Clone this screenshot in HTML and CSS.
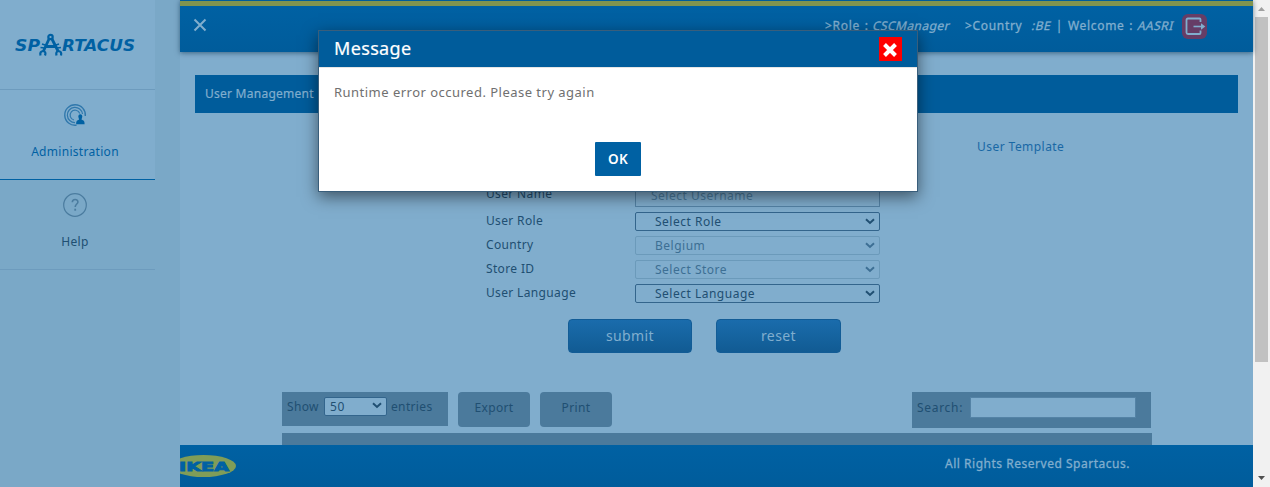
FILE: index.html
```html
<!DOCTYPE html>
<html lang="en">
<head>
<meta charset="utf-8">
<title>Spartacus - User Management</title>
<link rel="stylesheet" href="styles.css">
</head>
<body>
<div class="app">
  <aside class="sidebar">
    <div class="brand">
      <svg width="124" height="28" viewBox="0 0 124 28">
        <g class="brand-text">
          <text x="0" y="20" textLength="25" lengthAdjust="spacingAndGlyphs">SP</text>
          <text x="47" y="20" textLength="73" lengthAdjust="spacingAndGlyphs">RTACUS</text>
        </g>
        <g fill="none" stroke="#0061a3" stroke-width="2.8">
          <circle cx="35.500" cy="6" r="2.200" stroke-width="2.200"/>
          <path d="M34 8 28.500 20M37 8 43 20M31 15.500h9"/>
          <path d="M25.500 24.500q-1-4 2.500-4.500 3.500.5 2 4.500M41.500 24.500q-1-4 2-4.500 3.500.5 2.500 4.500" stroke-width="2.200"/>
          <path d="M27 13 30 14M25.500 16.500l4 .5M44 13 41 14M46 16.500l-4 .5" stroke-width="1.400"/>
        </g>
      </svg>
    </div>
    <div class="nav-item active">
      <svg class="nav-icon" width="24" height="24" viewBox="0 0 24 24" fill="none" stroke="#3078ac">
        <path d="M13.500 22.200A10.300 10.300 0 1 1 22.300 13" stroke-width="1.400"/>
        <path d="M12 19.600A7.600 7.600 0 1 1 19.500 11" stroke-width="1.200"/>
        <path d="M11 17A5 5 0 1 1 16.800 10.500" stroke-width="1.200"/>
        <path d="M15.500 14.500a2 2.200 0 1 1 3.600 0l-.6 2 2.300 1.200q.8.500.8 3.500h-8.500q0-3 .8-3.500l2.200-1.200z" fill="#0061a3" stroke="none"/>
      </svg>
      <span>Administration</span>
    </div>
    <div class="nav-item help">
      <svg class="nav-icon" width="24" height="24" viewBox="0 0 24 24" fill="none" stroke="#4b7c9f">
        <circle cx="12" cy="12" r="11.300" stroke-width="1.200"/>
        <path d="M9.300 9.200c.1-3.500 5.600-3.500 5.600-.2 0 2-2.700 2.200-2.700 5" stroke-width="1.600"/>
        <path d="M12.200 15.700v2" stroke-width="1.800"/>
      </svg>
      <span>Help</span>
    </div>
  </aside>

  <main class="main">
    <header class="topbar">
      <svg class="menu-close" width="14" height="14" viewBox="0 0 14 14"><path d="M1.500 1.500l11 11M12.500 1.500l-11 11" stroke="#80aece" stroke-width="2"/></svg>
      <div class="user-info">
        <span class="role">&gt;Role : <i>CSCManager</i></span>
        <span class="country">&gt;Country</span>
        <span class="welcome"><i>:BE</i> | Welcome : <i>AASRI</i></span>
      </div>
      <svg class="logout" width="25" height="25" viewBox="0 0 25 25">
        <rect width="25" height="25" rx="6" fill="#663d66"/>
        <path d="M18.500 8V5.500q0-1-1-1H6Q4.500 4.500 4.500 6v12.500q0 1.500 1.500 1.500h11.500q1 0 1-1v-2.500" fill="none" stroke="#80aece" stroke-width="1.800"/>
        <path d="M11.500 12.500H20" stroke="#80aece" stroke-width="1.600"/><path d="M19 9.300 23.300 12.500 19 15.700z" fill="#80aece"/>
      </svg>
    </header>

    <section class="content">
      <h1 class="page-title">User Management</h1>
      <a class="template-link">User Template</a>
      <form class="form">
        <div class="row row-first"><label>User Name</label><div class="control text-control">Select Username</div></div>
        <div class="row"><label>User Role</label><div class="control">Select Role<svg class="chevron" viewBox="0 0 10 7"><path d="M1 1.300l4 3.700 4-3.700"/></svg></div></div>
        <div class="row"><label>Country</label><div class="control disabled">Belgium<svg class="chevron" viewBox="0 0 10 7"><path d="M1 1.300l4 3.700 4-3.700"/></svg></div></div>
        <div class="row"><label>Store ID</label><div class="control disabled">Select Store<svg class="chevron" viewBox="0 0 10 7"><path d="M1 1.300l4 3.700 4-3.700"/></svg></div></div>
        <div class="row"><label>User Language</label><div class="control">Select Language<svg class="chevron" viewBox="0 0 10 7"><path d="M1 1.300l4 3.700 4-3.700"/></svg></div></div>
      </form>
      <div class="actions"><button class="btn">submit</button><button class="btn reset">reset</button></div>
      <div class="tools">
        <div class="length"><span class="show">Show</span><span class="count">50<svg class="chevron" viewBox="0 0 10 7"><path d="M1 1.300l4 3.700 4-3.700"/></svg></span>entries</div>
        <div class="tool">Export</div>
        <div class="tool">Print</div>
        <div class="search"><span class="search-label">Search:</span><span class="search-box"></span></div>
      </div>
      <div class="table-head"></div>
    </section>

    <footer class="footer">
      <svg class="ikea" width="57" height="24" viewBox="0 0 57 24">
        <ellipse cx="23.500" cy="12" rx="32.500" ry="11" fill="#809d58"/>
        <text class="ikea-text" x="-1" y="16.500" textLength="50" lengthAdjust="spacingAndGlyphs">IKEA</text>
      </svg>
      <span class="rights">All Rights Reserved Spartacus.</span>
    </footer>
  </main>

  <div class="scrollbar">
    <svg width="17" height="17" viewBox="0 0 17 17"><path d="M5 11h7L8.500 7z" fill="#a0a0a0"/></svg>
    <div class="thumb"></div>
    <svg width="17" height="17" viewBox="0 0 17 17"><path d="M5 6h7L8.500 10z" fill="#505050"/></svg>
  </div>
</div>

<div class="modal">
  <div class="modal-head"><span>Message</span>
    <svg class="modal-close" width="23" height="24" viewBox="0 0 23 24"><rect width="23" height="24" fill="#f00"/><path d="M5.500 7.500l11 11M16.500 7.500l-11 11" stroke="#fff" stroke-width="4"/></svg>
  </div>
  <p class="modal-text">Runtime error occured. Please try again</p>
  <button class="ok">OK</button>
</div>
</body>
</html>
```
FILE: styles.css
```css
* { box-sizing: border-box; }
body { margin: 0; overflow: hidden; font: 12px/16px "Noto Sans", sans-serif; letter-spacing: .35px; color: #204f72; }
button { font-family: inherit; letter-spacing: inherit; padding: 0; }
.app { display: grid; grid-template-columns: 180px 1073px 17px; height: 487px; }

.sidebar { background: #7aa8c7; padding-right: 25px; }
.brand { height: 90px; background: #80adcd; border-bottom: 1px solid #6d9bbd; padding: 31px 0 0 15px; }
.brand svg { display: block; }
.brand-text { font: italic bold 16.500px "DejaVu Sans", sans-serif; fill: #0061a3; letter-spacing: 0; }
.nav-item { height: 90px; display: flex; flex-direction: column; align-items: center; padding-right: 5px; border-bottom: 1px solid #6d9bbd; letter-spacing: .3px; }
.nav-item span { margin-top: 17px; }
.nav-icon { margin-top: 13px; }
.active { background: #80adcd; border-bottom-color: #0061a3; color: #0061a3; }

.main { height: 487px; display: grid; grid-template-rows: 52px 393px 42px; background: #80adcd; }
.topbar { display: flex; border-top: 1px solid #005c9b; background: linear-gradient(#80944f 5px, #0061a3 5px, #005c9b); box-shadow: 0 1px 5px rgba(0,40,70,.55); color: #80aece; position: relative; -webkit-text-stroke: .3px #80aece; }
.menu-close { margin: 17px 0 0 13px; }
.user-info { margin: 17px 0 0 auto; display: flex; white-space: pre; letter-spacing: .68px; word-spacing: 1px; }
.user-info i { display: inline-block; font-style: normal; transform: skewX(-14deg); letter-spacing: .45px; }
.role { width: 140px; }
.country { width: 67px; }
.welcome { width: 150px; }
.logout { margin: 13px 46px 0 0; }

.content { overflow: hidden; padding: 23px 15px 0; }
.page-title { margin: 0; height: 38px; padding: 11px 10px; background: #005c9b; color: #80aece; font-size: 12px; line-height: 16px; font-weight: 400; letter-spacing: .25px; -webkit-text-stroke: .2px #80aece; }
.template-link { display: block; margin: 26px 0 0 782px; color: #1968a5; letter-spacing: .45px; }
.form { width: 394px; margin: 31px 0 0 291px; }
.row { display: flex; height: 19px; margin-bottom: 5px; }
.row label { width: 149px; margin-top: 1px; }
.row-first { height: 21px; }
.row-first label { margin-top: 0; }
.control { width: 245px; height: 19px; border: 1px solid #33658c; border-radius: 2px; padding: 1px 4px 0 19px; display: flex; justify-content: space-between; letter-spacing: .5px; }
.text-control { height: 21px; padding: 1px 0 0 15px; border-color: #5483a6; border-radius: 0; color: #4b7c9f; }
.disabled { border-color: #6b9aba; color: #3d6f94; }
.chevron { width: 10px; height: 7px; margin-top: 4px; fill: none; stroke: #204f72; stroke-width: 2; }
.disabled .chevron { stroke: #3d6f94; }
.actions { display: flex; gap: 24px; margin: 16px 0 0 373px; }
.btn { width: 124px; height: 34px; padding-bottom: 2px; border: 1px solid #125c96; border-radius: 4px; color: #80aece; font-size: 14px; letter-spacing: .4px; background: linear-gradient(#1a6cac, #115b93); }
.reset { width: 125px; }
.tools { display: flex; align-items: flex-start; gap: 10px; width: 869px; margin: 39px 0 0 87px; }
.length { width: 166px; height: 34px; background: #4b7a9c; display: flex; padding: 5px; line-height: 20px; }
.show { width: 37px; }
.count { width: 63px; height: 19px; margin-right: 4px; padding: 0 4px 0 5px; background: #80adcd; border: 1px solid #33658c; border-radius: 2px; display: flex; justify-content: space-between; line-height: 18px; letter-spacing: .7px; }
.tool { width: 72px; height: 35px; border-radius: 4px; background: #4b7a9c; text-align: center; padding-top: 8px; }
.search { width: 239px; height: 36px; margin-left: auto; padding: 5px; background: #4b7a9c; display: flex; line-height: 21px; letter-spacing: .7px; }
.search-label { width: 53px; }
.search-box { width: 166px; height: 21px; background: #80adcd; border: 1px solid #5483a6; }
.table-head { width: 870px; height: 40px; margin: 5px 0 0 87px; background: #4b7a9c; }

.footer { background: linear-gradient(#0061a3, #005c9b); color: #80aece; display: flex; }
.ikea { margin-top: 9px; }
.ikea-text { font: bold 13px "DejaVu Sans", sans-serif; letter-spacing: 0; fill: #0061a3; stroke: #0061a3; stroke-width: .9; }
.rights { margin: 11px 0 0 708px; letter-spacing: .52px; -webkit-text-stroke: .3px #80aece; }

.scrollbar { background: #f1f1f1; display: flex; flex-direction: column; }
.thumb { width: 13px; height: 345px; margin: 0 2px auto; background: #c1c1c1; }

.modal { position: absolute; left: 318px; top: 30px; width: 600px; height: 162px; background: #fff; border: 1px solid #395e7b; box-shadow: 0 5px 15px rgba(0,0,0,.5); }
.modal-head { height: 37px; border-bottom: 1px solid #e5e5e5; background: #005c9b; color: #fff; display: flex; justify-content: space-between; padding: 6px 15px 0; font-size: 18px; line-height: 24px; -webkit-text-stroke: .2px #fff; }
.modal-head span { margin-top: -1px; }
.modal-text { margin: 16px 15px 0; color: #707070; font-size: 13px; line-height: 16px; letter-spacing: .48px; }
.ok { display: block; width: 46px; height: 34px; margin: 42px 0 0 276px; background: #0061a3; color: #fff; border: 0; border-radius: 1px; font-size: 13.500px; font-weight: 600; }
```
